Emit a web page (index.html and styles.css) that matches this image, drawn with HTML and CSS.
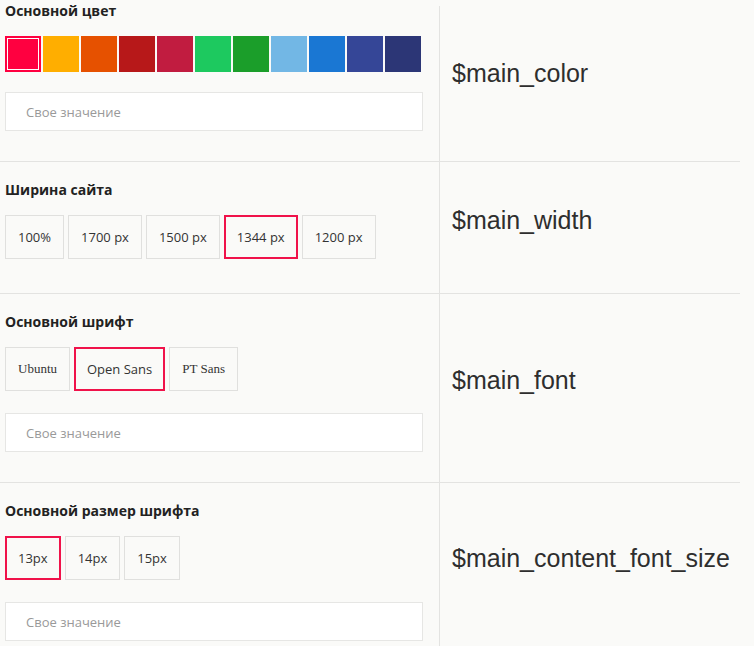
FILE: index.html
```html
<!DOCTYPE html>
<html lang="ru">
<head>
  <meta charset="UTF-8">
  <title>Настройки темы</title>
  <link rel="stylesheet" href="styles.css">
</head>
<body>

  <div class="settings">

    <div class="row first">
      <div class="left">
        <div class="title">Основной цвет</div>
        <div class="swatches">
          <span class="swatch active" style="background:#ff0040"></span>
          <span class="swatch" style="background:#ffae00"></span>
          <span class="swatch" style="background:#e65100"></span>
          <span class="swatch" style="background:#b71819"></span>
          <span class="swatch" style="background:#c11c40"></span>
          <span class="swatch" style="background:#1dc95f"></span>
          <span class="swatch" style="background:#1b9e2a"></span>
          <span class="swatch" style="background:#72b7e5"></span>
          <span class="swatch" style="background:#1a77d3"></span>
          <span class="swatch" style="background:#354697"></span>
          <span class="swatch" style="background:#2c3676"></span>
        </div>
        <input class="field" type="text" placeholder="Свое значение">
      </div>
      <div class="right">$main_color</div>
    </div>

    <div class="row">
      <div class="left">
        <div class="title">Ширина сайта</div>
        <div class="opts">
          <span class="opt">100%</span>
          <span class="opt">1700 px</span>
          <span class="opt">1500 px</span>
          <span class="opt active">1344 px</span>
          <span class="opt">1200 px</span>
        </div>
      </div>
      <div class="right">$main_width</div>
    </div>

    <div class="row">
      <div class="left">
        <div class="title">Основной шрифт</div>
        <div class="opts">
          <span class="opt serif">Ubuntu</span>
          <span class="opt active">Open Sans</span>
          <span class="opt serif">PT Sans</span>
        </div>
        <input class="field" type="text" placeholder="Свое значение">
      </div>
      <div class="right">$main_font</div>
    </div>

    <div class="row last">
      <div class="left">
        <div class="title">Основной размер шрифта</div>
        <div class="opts">
          <span class="opt active">13px</span>
          <span class="opt">14px</span>
          <span class="opt">15px</span>
        </div>
        <input class="field" type="text" placeholder="Свое значение">
      </div>
      <div class="right">$main_content_font_size</div>
    </div>

  </div>

</body>
</html>
```

FILE: styles.css
```css
body {
  margin: 0;
  background: #fafaf8;
  font-family: 'Open Sans', sans-serif;
  font-size: 13px;
  color: #333;
}

.settings {
  width: 740px;
}

.row {
  display: flex;
  border-bottom: 1px solid #e3e3e1;
}

.row.last {
  border-bottom: none;
}

.left {
  width: 418px;
  padding: 19px 16px 30px 5px;
}

.row.first .left {
  padding-top: 2px;
}

.row.last .left {
  padding-bottom: 5px;
}

.right {
  flex: 1;
  display: flex;
  align-items: center;
  padding: 0 0 15px 12px;
  border-left: 1px solid #e3e3e1;
  font-family: 'Liberation Sans', Arial, sans-serif;
  font-size: 25px;
  color: #2e2e2e;
}

.row.first .right {
  margin-top: 6px;
  padding-bottom: 21px;
}

.row.last .right {
  padding-bottom: 12px;
}

.title {
  font-weight: bold;
  font-size: 14px;
  line-height: 18px;
  color: #222;
  margin-bottom: 16px;
}

.swatches {
  display: flex;
  gap: 2px;
  margin-bottom: 20px;
}

.swatch {
  width: 36px;
  height: 36px;
}

.swatch.active {
  box-shadow: inset 0 0 0 2px #ff0040, inset 0 0 0 3px #fff;
}

.opts {
  display: flex;
  gap: 4px;
  margin-bottom: 22px;
}

.opts:last-child {
  margin-bottom: 4px;
}

.opt {
  box-sizing: border-box;
  height: 44px;
  display: flex;
  align-items: center;
  padding: 0 12px;
  border: 1px solid #e0e0de;
  color: #333;
  cursor: pointer;
}

.opt.serif {
  font-family: 'Liberation Serif', serif;
}

.opt.active {
  border-color: #f0124a;
  box-shadow: inset 0 0 0 1px #f0124a;
}

.field {
  display: block;
  box-sizing: border-box;
  width: 418px;
  height: 39px;
  margin: 0;
  padding: 0 20px;
  border: 1px solid #e6e6e4;
  background: #fff;
  font-family: 'Open Sans', sans-serif;
  font-size: 13px;
  color: #333;
  outline: none;
}

.field::placeholder {
  color: #999;
}
```
